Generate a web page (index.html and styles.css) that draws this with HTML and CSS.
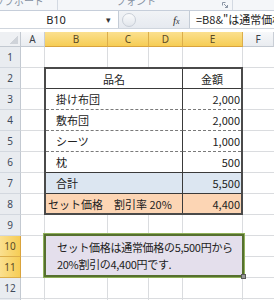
FILE: index.html
```html
<!DOCTYPE html>
<html lang="ja">
<head>
    <meta charset="UTF-8">
    <title>セット価格</title>
    <link rel="stylesheet" href="styles.css">
</head>
<body>
    <div class="app">
        <div class="ribbon">
            <div class="group clip">
                <span class="group-name">クリップボード</span>
                <svg class="launcher" width="6" height="6" viewBox="0 0 6 6"><path d="M0.5 0.5h3M0.5 0.5v3M2 2l3.5 3.5M5.5 3v2.5h-2.5" fill="none" stroke="#8a95a5" stroke-width="1"/></svg>
            </div>
            <div class="group font">
                <span class="group-name">フォント</span>
                <svg class="launcher" width="6" height="6" viewBox="0 0 6 6"><path d="M0.5 0.5h3M0.5 0.5v3M2 2l3.5 3.5M5.5 3v2.5h-2.5" fill="none" stroke="#8a95a5" stroke-width="1"/></svg>
            </div>
            <div class="group rest"></div>
        </div>

        <div class="formula-bar">
            <div class="name-box">
                <span class="cell-ref">B10</span>
                <span class="drop">&#9662;</span>
            </div>
            <div class="fx-area">
                <span class="grip"></span>
                <span class="fx"><i>f</i><small>x</small></span>
            </div>
            <div class="formula">=B8&amp;"は通常価格の"&amp;TEXT(E7,"#,##0")&amp;"円から"</div>
        </div>

        <div class="sheet">
            <div class="corner"></div>
            <div class="col-head">A</div>
            <div class="col-head on">B</div>
            <div class="col-head on">C</div>
            <div class="col-head on">D</div>
            <div class="col-head on">E</div>
            <div class="col-head">F</div>

            <div class="row-head">1</div>
            <div class="row-head">2</div>
            <div class="row-head">3</div>
            <div class="row-head">4</div>
            <div class="row-head">5</div>
            <div class="row-head">6</div>
            <div class="row-head">7</div>
            <div class="row-head">8</div>
            <div class="row-head">9</div>
            <div class="row-head on">10</div>
            <div class="row-head on">11</div>
            <div class="row-head">12</div>
            <div class="row-head">13</div>

            <!-- グリッド線 -->
            <div class="col-lines col-a"></div>
            <div class="col-lines col-b"></div>
            <div class="col-lines col-c"></div>
            <div class="col-lines col-d"></div>
            <div class="col-lines col-e"></div>
            <div class="col-lines col-f"></div>

            <div class="price-table">
                <div class="cell head">品名</div>
                <div class="cell head amount">金額</div>

                <div class="cell item dash">掛け布団</div>
                <div class="cell num dash">2,000</div>
                <div class="cell item dash">敷布団</div>
                <div class="cell num dash">2,000</div>
                <div class="cell item dash">シーツ</div>
                <div class="cell num dash">1,000</div>
                <div class="cell item">枕</div>
                <div class="cell num">500</div>

                <div class="cell item total">合計</div>
                <div class="cell num total">5,500</div>

                <div class="cell label set">セット価格　割引率 20%</div>
                <div class="cell num set last">4,400</div>
            </div>

            <div class="text-box">
                セット価格は通常価格の5,500円から<br>20%割引の4,400円です.
                <span class="handle"></span>
            </div>
        </div>
    </div>
</body>
</html>
```

FILE: styles.css
```css
* {
    box-sizing: border-box;
}

body {
    margin: 0;
    background: #fff;
    font-family: "Noto Sans", "Noto Sans CJK JP", sans-serif;
    color: #222;
}

.app {
    width: 274px;
    height: 300px;
    overflow: hidden;
    background: #fff;
}

/* リボン下端 */
.ribbon {
    display: flex;
    height: 11px;
    background: #f4f6f9;
    border-bottom: 1px solid #c6ceda;
    overflow: hidden;
}

.group {
    display: flex;
    align-items: flex-start;
    border-right: 1px solid #d3d9e2;
}

.group-name {
    font-family: "Noto Sans CJK JP", sans-serif;
    font-size: 10px;
    line-height: 12px;
    margin-top: -5px;
    color: #8792a3;
    white-space: nowrap;
}

.launcher {
    margin-top: 2px;
}

.clip {
    width: 58px;
    justify-content: flex-end;
    gap: 9px;
    padding-right: 4px;
}

.font {
    width: 175px;
    justify-content: flex-end;
    gap: 66px;
    padding-right: 4px;
}

.rest {
    flex: 1;
    border-right: none;
}

/* 数式バー */
.formula-bar {
    display: flex;
    height: 18px;
    background: linear-gradient(#f1f3f6, #e6eaf0);
    border-bottom: 1px solid #cfd5dd;
}

.name-box {
    width: 119px;
    display: flex;
    align-items: center;
    background: #fff;
    border-right: 1px solid #c4ccd6;
}

.cell-ref {
    flex: 1;
    text-align: center;
    padding-left: 6px;
    font-size: 11px;
    color: #222;
}

.drop {
    width: 12px;
    font-size: 9px;
    color: #333;
}

.fx-area {
    width: 70px;
    display: flex;
    align-items: center;
    padding-left: 3px;
}

.grip {
    width: 14px;
    height: 14px;
    border-radius: 7px;
    border: 1px solid #c8ced7;
    background: linear-gradient(#fafbfc, #e2e6ec);
}

.fx {
    margin-left: 37px;
    font-family: "Liberation Serif", serif;
    font-size: 11px;
    color: #333;
}

.fx small {
    font-size: 8px;
    font-style: italic;
}

.formula {
    flex: 1;
    background: #fff;
    border-left: 1px solid #c4ccd6;
    padding-left: 6px;
    font-family: "Noto Sans CJK JP", sans-serif;
    font-size: 11px;
    line-height: 17px;
    white-space: nowrap;
    overflow: hidden;
}

/* シート */
.sheet {
    margin-top: 3px;
    display: grid;
    grid-template-columns: 21px 24px 63px 41px 34px 60px 1fr;
    grid-template-rows: 15px repeat(13, 21px);
}

.corner {
    grid-column: 1;
    grid-row: 1;
    background: #eef0f3 linear-gradient(135deg, transparent 50%, #cfd3d9 50%) no-repeat right 2px bottom 2px / 8px 8px;
    border-right: 1px solid #c3c9d1;
    border-bottom: 1px solid #c3c9d1;
}

.col-head {
    grid-row: 1;
    display: flex;
    align-items: center;
    justify-content: center;
    font-size: 10px;
    color: #3a3f47;
    background: linear-gradient(#f7f8fa, #e9ecf0);
    border-right: 1px solid #c9ced6;
    border-bottom: 1px solid #c3c9d1;
}

.col-head.on {
    background: linear-gradient(#fbe08f, #f6cd55);
    border-right-color: #dcae4a;
    border-bottom-color: #d9a33d;
    color: #5a4a25;
}

.row-head {
    grid-column: 1;
    display: flex;
    align-items: center;
    justify-content: center;
    font-size: 10px;
    color: #3f4a5a;
    background: #e9ecf0;
    border-right: 1px solid #c3c9d1;
    border-bottom: 1px solid #d3d8df;
}

.row-head.on {
    background: linear-gradient(90deg, #fbe08f, #f6cd55);
    border-right-color: #d9a33d;
    border-bottom-color: #dcae4a;
    color: #5a4a25;
}

.col-lines {
    grid-row: 2 / -1;
    border-right: 1px solid #dadcdf;
    background: repeating-linear-gradient(to bottom, transparent 0 20px, #dadcdf 20px 21px);
}

.col-a { grid-column: 2; }
.col-b { grid-column: 3; }
.col-c { grid-column: 4; }
.col-d { grid-column: 5; }
.col-e { grid-column: 6; }
.col-f { grid-column: 7; border-right: none; }

/* 価格表 */
.price-table {
    grid-column: 3 / 7;
    grid-row: 3 / 10;
    margin: -1px 0 0 -1px;
    display: grid;
    grid-template-columns: 137px 1fr;
    grid-template-rows: 20px repeat(5, 21px) 1fr;
    background: #fff;
    border: 2px solid #4a4a4a;
    font-family: "Noto Sans CJK JP", sans-serif;
    font-size: 11px;
    color: #222;
}

.cell {
    display: flex;
    align-items: center;
    white-space: nowrap;
    border-bottom: 1px solid #3a3a3a;
}

.cell:nth-child(odd) {
    border-right: 1px solid #3a3a3a;
}

.cell.dash {
    border-bottom: 1px dashed #7a7a7a;
}

.cell.last,
.cell.set {
    border-bottom: none;
}

.head {
    justify-content: center;
}

.item {
    padding-left: 10px;
}

.label {
    padding-left: 2px;
}

.num {
    justify-content: flex-end;
    padding-right: 1px;
}

.total {
    background: #dce6f1;
}

.set {
    background: #fcd5b4;
}

/* テキストボックス */
.text-box {
    grid-column: 3 / 7;
    grid-row: 11 / 13;
    margin: -2px -1px 1px -1px;
    position: relative;
    padding: 3px 0 0 11px;
    background: #e4dfec;
    border: 2px solid #56702f;
    box-shadow: 0 0 0 1px #8fb05a;
    font-family: "Noto Sans CJK JP", sans-serif;
    font-size: 11px;
    line-height: 17px;
    letter-spacing: -0.3px;
    color: #222;
    white-space: nowrap;
}

.handle {
    position: absolute;
    right: -4px;
    bottom: -4px;
    width: 5px;
    height: 5px;
    background: #9a9a9a;
    border: 1px solid #5a5a5a;
}
```
